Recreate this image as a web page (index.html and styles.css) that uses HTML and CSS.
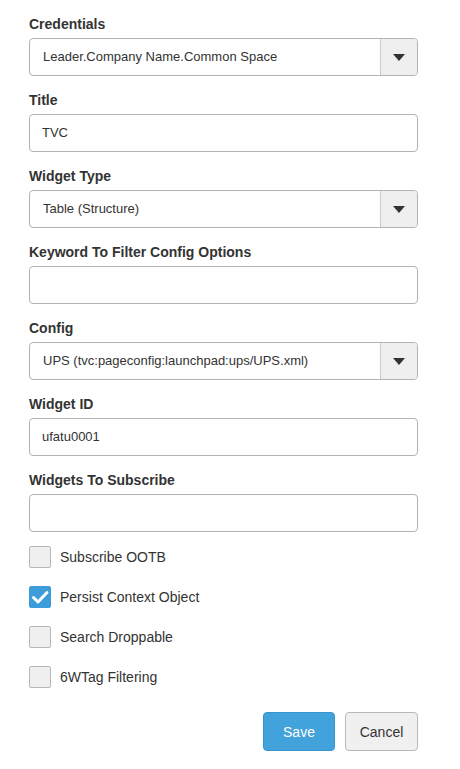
FILE: index.html
```html
<!DOCTYPE html>
<html>
<head>
<meta charset="utf-8">
<link rel="stylesheet" href="styles.css">
</head>
<body>
<form class="form">
  <div class="field">
    <label class="label">Credentials</label>
    <div class="select">
      <span class="select-value">Leader.Company Name.Common Space</span>
      <span class="select-btn"><span class="caret"></span></span>
    </div>
  </div>
  <div class="field">
    <label class="label">Title</label>
    <div class="input">TVC</div>
  </div>
  <div class="field">
    <label class="label">Widget Type</label>
    <div class="select">
      <span class="select-value">Table (Structure)</span>
      <span class="select-btn"><span class="caret"></span></span>
    </div>
  </div>
  <div class="field">
    <label class="label">Keyword To Filter Config Options</label>
    <div class="input"></div>
  </div>
  <div class="field">
    <label class="label">Config</label>
    <div class="select">
      <span class="select-value">UPS (tvc:pageconfig:launchpad:ups/UPS.xml)</span>
      <span class="select-btn"><span class="caret"></span></span>
    </div>
  </div>
  <div class="field">
    <label class="label">Widget ID</label>
    <div class="input">ufatu0001</div>
  </div>
  <div class="field">
    <label class="label">Widgets To Subscribe</label>
    <div class="input"></div>
  </div>
  <div class="checks">
    <div class="check"><span class="box"></span><span class="check-label">Subscribe OOTB</span></div>
    <div class="check"><span class="box checked"><svg width="22" height="22" viewBox="0 0 22 22"><path d="M4.5 11.5 L9 16 L18 6.5" fill="none" stroke="#fff" stroke-width="3" stroke-linecap="round" stroke-linejoin="round"/></svg></span><span class="check-label">Persist Context Object</span></div>
    <div class="check"><span class="box"></span><span class="check-label">Search Droppable</span></div>
    <div class="check"><span class="box"></span><span class="check-label">6WTag Filtering</span></div>
  </div>
  <div class="actions">
    <button type="button" class="btn btn-primary">Save</button>
    <button type="button" class="btn btn-default">Cancel</button>
  </div>
</form>
</body>
</html>
```
FILE: styles.css
```css
* { box-sizing: border-box; }
html, body { margin: 0; background: #fff; }
body {
  font-family: "Liberation Sans", Arial, sans-serif;
  font-size: 14px;
  color: #333;
}
.form {
  width: 389px;
  margin-left: 29px;
  padding-top: 14px;
}
.field {
  display: flex;
  flex-direction: column;
  margin-bottom: 14px;
}
.label {
  font-weight: bold;
  line-height: 20px;
  margin-bottom: 4px;
  color: #333;
}
.input, .select {
  height: 38px;
  border: 1px solid #b3b3b3;
  border-radius: 4px;
  background: #fff;
  line-height: 36px;
  font-size: 13px;
  color: #333;
}
.input { padding: 0 12px; }
.select {
  display: flex;
  align-items: stretch;
}
.select-value {
  flex: 1;
  padding: 0 13px;
}
.select-btn {
  width: 37px;
  border-left: 1px solid #cccccc;
  background: #efefef;
  border-radius: 0 3px 3px 0;
  display: flex;
  align-items: center;
  justify-content: center;
}
.caret {
  width: 0;
  height: 0;
  border-left: 6px solid transparent;
  border-right: 6px solid transparent;
  border-top: 7px solid #333;
  margin-top: 1px;
}
.checks {
  display: flex;
  flex-direction: column;
  gap: 18px;
}
.check {
  display: flex;
  align-items: center;
  height: 22px;
}
.box {
  width: 22px;
  height: 22px;
  border: 1px solid #b8b8b8;
  border-radius: 2px;
  background: #efefef;
  margin-right: 9px;
  display: flex;
}
.box.checked {
  background: #3d9ddb;
  border-color: #3d9ddb;
}
.box svg { margin: -1px; }
.check-label { color: #333; }
.actions {
  display: flex;
  justify-content: flex-end;
  gap: 10px;
  margin-top: 24px;
}
.btn {
  height: 39px;
  border-radius: 4px;
  font-family: "Liberation Sans", Arial, sans-serif;
  font-size: 14px;
  padding: 0;
}
.btn-primary {
  width: 72px;
  background: #42a2db;
  border: 1px solid #3a94cc;
  color: #fff;
}
.btn-default {
  width: 73px;
  background: #f0f0f0;
  border: 1px solid #b8b8b8;
  color: #333;
}
```
